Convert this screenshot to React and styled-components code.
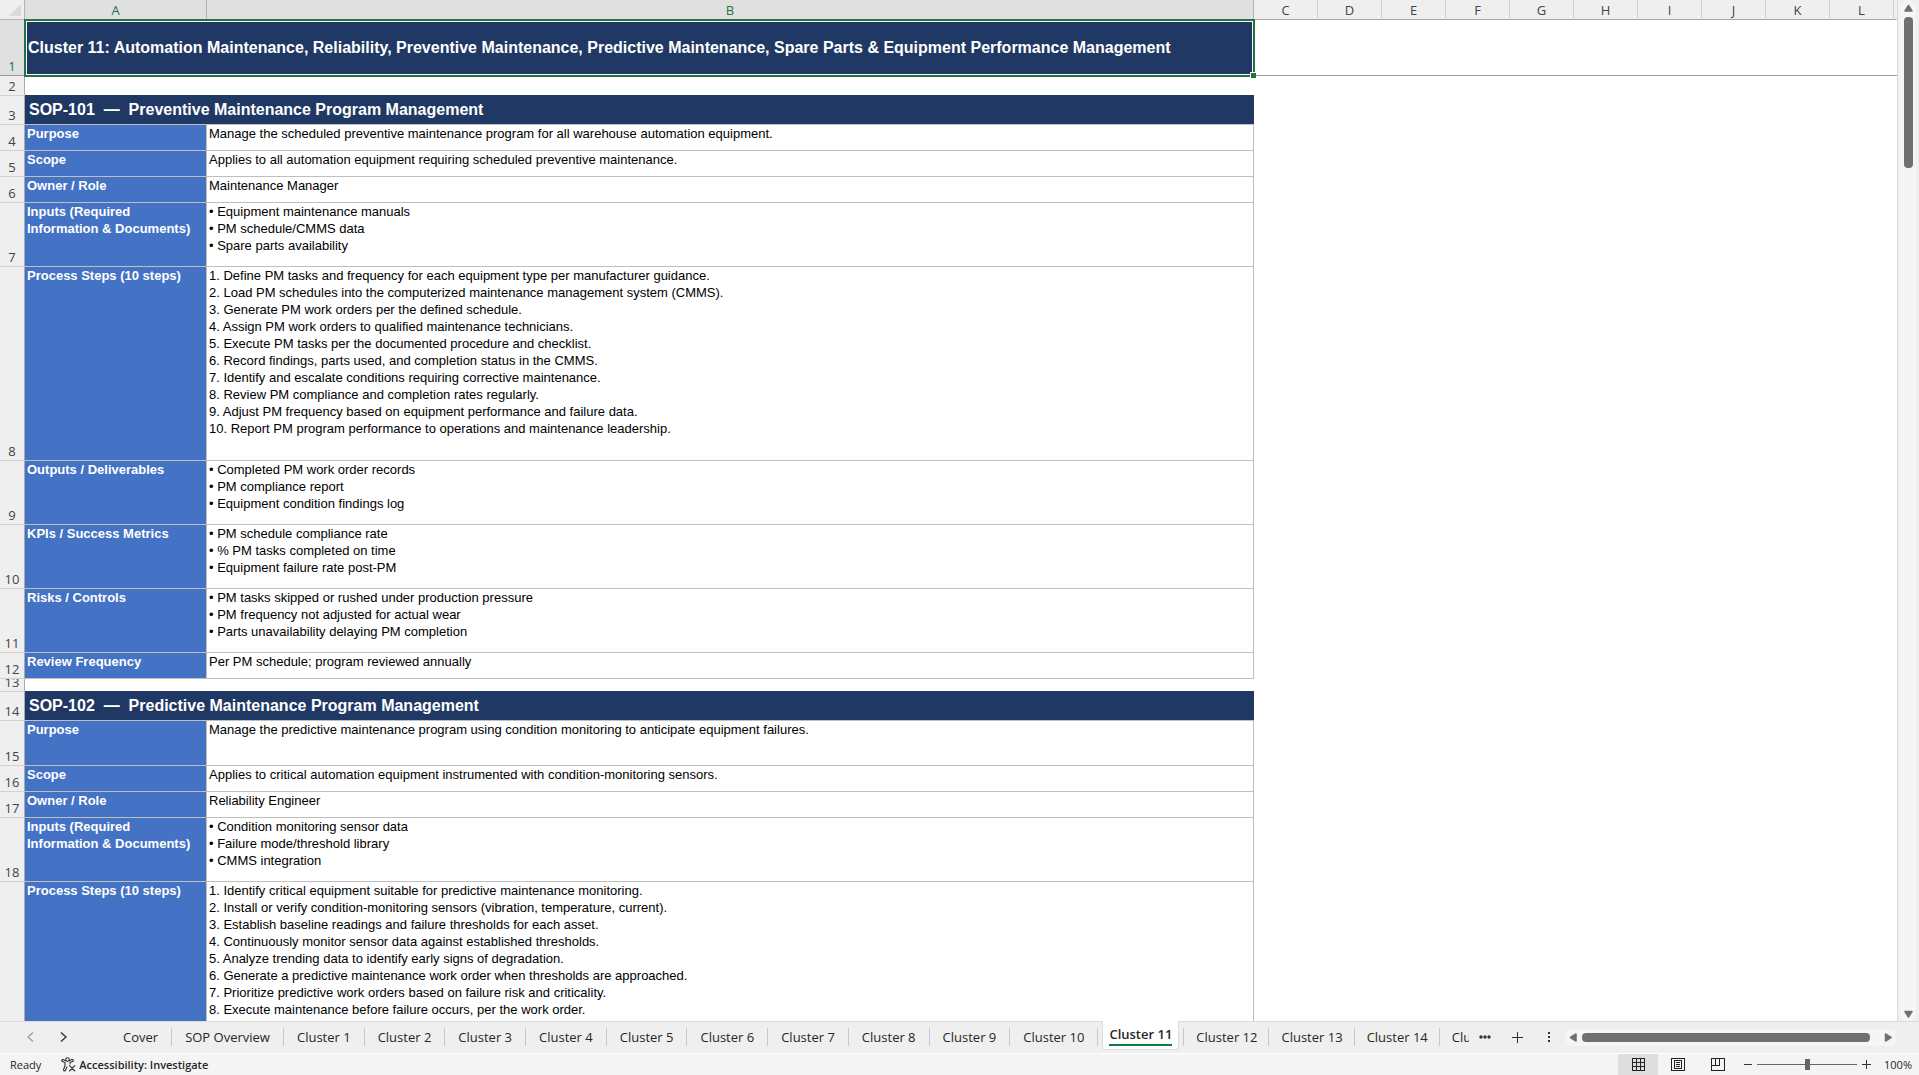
import React from "react";
import styled, { createGlobalStyle, css } from "styled-components";

const UI = `"Open Sans", "Noto Sans", sans-serif`;
const CELL = `"Liberation Sans", Arial, sans-serif`;

const Global = createGlobalStyle`
  *, *::before, *::after { box-sizing: border-box; }
  html, body { margin: 0; height: 100%; overflow: hidden; background: #efefef; }
  #root { height: 100%; }
  button { font: inherit; color: inherit; border: 0; background: none; padding: 0; cursor: pointer; }
`;

const Window = styled.div`
  display: flex;
  flex-direction: column;
  height: 100vh;
  font-family: ${UI};
  font-size: 13px;
  color: #262626;
`;

const Workspace = styled.div`
  flex: 1;
  min-height: 0;
  display: flex;
`;

const Sheet = styled.main`
  flex: 1;
  min-width: 0;
  overflow: hidden;
  background: #fff;
  border-right: 1px solid #dcdcdc;
`;

const Grid = styled.table`
  width: 100%;
  table-layout: fixed;
  border-collapse: separate;
  border-spacing: 0;
`;

const Col = styled.col`
  width: ${(p) => (p.$w ? `${p.$w}px` : "auto")};
`;

const headFace = css`
  padding: 0;
  font-weight: 400;
  line-height: 17px;
  color: ${(p) => (p.$on ? "#217346" : "#444")};
`;

const ColHead = styled.th`
  ${headFace}
  height: 20px;
  padding-top: 2px;
  text-align: center;
  background: ${(p) => (p.$on ? "#e0e0e0" : "#efefef")};
  border-bottom: 1px solid ${(p) => (p.$on ? "#217346" : "#a6a6a6")};
  border-right: 1px solid;
  border-right-color: ${(p) => (p.$last ? "transparent" : p.$on ? "#b4b4b4" : "#d2d2d2")};
`;

const Corner = styled.td`
  padding: 0 3px 3px 0;
  height: 20px;
  background: #efefef;
  border-right: 1px solid #b4b4b4;
  border-bottom: 1px solid #b4b4b4;
  vertical-align: bottom;
  line-height: 0;
  text-align: right;
`;

const RowHead = styled.th`
  ${headFace}
  height: ${(p) => p.$h}px;
  vertical-align: bottom;
  text-align: center;
  background: ${(p) => (p.$on ? "#e0e0e0" : "#efefef")};
  border-right: 1px solid ${(p) => (p.$on ? "#217346" : "#ababab")};
  border-bottom: 1px solid ${(p) => (p.$on ? "#999" : "#d2d2d2")};
`;

const RowNumber = styled.div`
  display: flex;
  align-items: flex-end;
  justify-content: center;
  height: ${(p) => Math.min(p.$h - 1, 17)}px;
  line-height: 17px;
  overflow: hidden;
`;

const TitleCell = styled.td`
  position: relative;
  padding: 0 3px;
  background: #203864;
  border-bottom: 1px solid #999;
  color: #fff;
  font: 700 16px/24px ${CELL};
  white-space: nowrap;
`;

const Selection = styled.span`
  position: absolute;
  inset: -1px -1px -2px -1px;
  border: 2px solid #217346;
  box-shadow: inset 0 0 0 1px #fff;
  pointer-events: none;

  &::after {
    content: "";
    position: absolute;
    right: -3px;
    bottom: -3px;
    width: 6px;
    height: 6px;
    background: #217346;
    border-left: 1px solid #fff;
    border-top: 1px solid #fff;
  }
`;

const FrozenEdge = styled.td`
  border-bottom: 1px solid #999;
`;

const Blank = styled.td`
  padding: 0;
  border-bottom: 1px solid #203864;
`;

const SectionCell = styled.td`
  padding: 0 4px;
  background: #203864;
  border-bottom: 1px solid #bfbfbf;
  color: #fff;
  font: 700 16px/24px ${CELL};
  white-space: pre;
`;

const LabelCell = styled.th`
  padding: 0 2px;
  text-align: left;
  vertical-align: top;
  background: #4472c4;
  color: #fff;
  border-right: 1px solid #bfbfbf;
  border-bottom: 1px solid #bfbfbf;
  font: 700 13px/17px ${CELL};
`;

const TextCell = styled.td`
  padding: 0 2px;
  vertical-align: top;
  color: #000;
  border-right: 1px solid #bfbfbf;
  border-bottom: 1px solid #bfbfbf;
  font: 400 13px/17px ${CELL};
`;

const VerticalScroll = styled.div`
  width: 21px;
  padding: 0 3px 0 2px;
  display: flex;
`;

const VerticalTrack = styled.div`
  flex: 1;
  display: flex;
  flex-direction: column;
  align-items: center;
  padding: 4px 0 2px;
  background: #f5f5f5;
  border-radius: 8px;
`;

const ScrollButton = styled.button`
  display: flex;
  line-height: 0;
`;

const VerticalThumb = styled.div`
  width: 9px;
  height: 151px;
  margin: 4px 0 auto;
  border-radius: 4px;
  background: #707070;
`;

const TabBar = styled.nav`
  display: flex;
  height: 32px;
  background: #efefef;
  border-top: 1px solid #dcdcdc;
`;

const TabArrows = styled.div`
  display: flex;
  align-items: center;
  gap: 24px;
  padding: 0 42px 1px 26px;
  button { display: flex; }
`;

const Tabs = styled.div`
  flex: 1;
  min-width: 0;
  display: flex;
  overflow: hidden;
  margin-top: -1px;
`;

const Tab = styled.button`
  flex: none;
  position: relative;
  height: 32px;
  padding: ${(p) => (p.$tight ? "0 12px" : "0 14px 0 13px")};
  font-size: 13px;
  line-height: 32px;
  white-space: nowrap;

  &::after {
    content: "";
    position: absolute;
    right: 0;
    top: 7px;
    height: 18px;
    width: 1px;
    background: #c8c8c8;
  }
`;

const ActiveTab = styled(Tab)`
  height: 29px;
  margin: 0 5px 0 4px;
  padding: 0 6px;
  font-weight: 600;
  line-height: 20px;
  background: #fff;
  border: 1px solid #dcdcdc;
  border-top: 0;
  border-radius: 0 0 4px 4px;

  &::after { right: -6px; }
  span { display: block; border-bottom: 2px solid #107c41; }
`;

const TabTools = styled.div`
  display: flex;
  padding-bottom: 1px;
`;

const ToolButton = styled.button`
  display: flex;
  align-items: center;
  justify-content: center;
  width: 32px;
`;

const HorizontalTrack = styled.div`
  display: flex;
  align-items: center;
  align-self: center;
  width: 332px;
  height: 17px;
  margin-right: 22px;
  padding: 0 4px;
  gap: 4px;
  background: #f5f5f5;
  border-radius: 8px;
`;

const HorizontalThumb = styled.div`
  width: 288px;
  height: 9px;
  margin-right: auto;
  border-radius: 4px;
  background: #707070;
`;

const StatusBar = styled.footer`
  display: flex;
  align-items: stretch;
  height: 22px;
  background: #f4f4f4;
  border-top: 1px solid #fff;
  font-size: 11px;
`;

const StatusText = styled.span`
  padding: 0 20px 0 10px;
  line-height: 22px;
`;

const AccessButton = styled.button`
  display: flex;
  align-items: center;
  gap: 3px;
  font-weight: 600;
`;

const ViewButtons = styled.div`
  display: flex;
  margin-left: auto;
`;

const ViewButton = styled.button`
  display: flex;
  align-items: center;
  justify-content: center;
  width: 40px;
  padding-bottom: 1px;
  background: ${(p) => (p.$on ? "#dedede" : "transparent")};
`;

const Zoom = styled.div`
  display: flex;
  align-items: center;
  gap: 5px;
  padding: 0 7px 0 6px;
  button { display: flex; }
`;

const Slider = styled.input`
  appearance: none;
  width: 100px;
  height: 12px;
  margin: 0;
  background: linear-gradient(#666, #666) center / 100% 1px no-repeat;

  &::-webkit-slider-thumb {
    appearance: none;
    width: 5px;
    height: 11px;
    background: #666;
  }
`;

const ZoomLevel = styled.button`
  padding-left: 8px;
`;

const Triangle = ({ dir }) => {
  const d = {
    up: "M1 7 L4.5 1.5 L8 7 Z",
    down: "M1 1.5 L8 1.5 L4.5 7 Z",
    left: "M7 1 L1.5 4.5 L7 8 Z",
    right: "M1.5 1 L7 4.5 L1.5 8 Z",
  }[dir];
  return (
    <svg width="9" height="9" viewBox="0 0 9 9">
      <path d={d} fill="#707070" stroke="#707070" strokeWidth="1.5" strokeLinejoin="round" />
    </svg>
  );
};

const Chevron = ({ dir, color }) => (
  <svg width="9" height="12" viewBox="0 0 9 12" fill="none" stroke={color} strokeWidth="1.4">
    <path d={dir === "left" ? "M7 1.5 L2 6 L7 10.5" : "M2 1.5 L7 6 L2 10.5"} />
  </svg>
);

const AccessIcon = () => (
  <svg width="15" height="15" viewBox="0 0 15 15" fill="none" stroke="#333" strokeWidth="1.1" strokeLinejoin="round" strokeLinecap="round">
    <circle cx="6.5" cy="2.6" r="1.8" />
    <path d="M4.6 3.8 L2 2.6 C.7 2.2 .2 3.9 1.3 4.4 L4 5.6 V8.5 L2.6 12.5 C2.3 14 4 14.5 4.5 13.3 L6 10" />
    <path d="M8.4 3.8 L11 2.6 C12.3 2.2 12.8 3.9 11.7 4.4 L9 5.6 V7" />
    <path d="M8.5 8.7 L13.8 14 M13.8 8.7 L8.5 14" />
  </svg>
);

const GridIcon = () => (
  <svg width="13" height="13" viewBox="0 0 13 13" fill="none" stroke="#222" shapeRendering="crispEdges">
    <path d="M.5 .5H12.5V12.5H.5Z M4.5 .5V12.5 M8.5 .5V12.5 M.5 4.5H12.5 M.5 8.5H12.5" />
  </svg>
);

const PageIcon = () => (
  <svg width="14" height="13" viewBox="0 0 14 13" fill="none" stroke="#222" shapeRendering="crispEdges">
    <path d="M.5 .5H13.5V12.5H.5Z M3.5 2.5H10.5V10.5H3.5Z M5 4.5H9 M5 6.5H9 M5 8.5H9" />
  </svg>
);

const BreakIcon = () => (
  <svg width="14" height="13" viewBox="0 0 14 13" fill="none" stroke="#222" shapeRendering="crispEdges">
    <path d="M.5 .5H13.5V12.5H.5Z M4.5 .5V7.5 M8.5 .5V7.5 M.5 7.5H8.5" />
  </svg>
);

const Plus = ({ size }) => (
  <svg width={size} height={size} viewBox={`0 0 ${size} ${size}`} stroke="#333" shapeRendering="crispEdges">
    <path d={`M0 ${size / 2}H${size} M${size / 2} 0V${size}`} />
  </svg>
);

const Minus = () => (
  <svg width="8" height="9" viewBox="0 0 8 9" stroke="#333" shapeRendering="crispEdges">
    <path d="M0 4.5H8" />
  </svg>
);

const Dots = ({ vertical }) => (
  <svg width={vertical ? 2 : 12} height={vertical ? 12 : 4} fill="#333">
    {[0, 1, 2].map((i) =>
      vertical ? (
        <rect key={i} x="0" y={i * 4 + 1} width="2" height="2" />
      ) : (
        <circle key={i} cx={i * 4 + 2} cy="2" r="1.7" />
      )
    )}
  </svg>
);

const letters = ["C", "D", "E", "F", "G", "H", "I", "J", "K", "L"];

const rows = [
  { h: 29, section: "SOP-101  —  Preventive Maintenance Program Management" },
  { h: 26, label: "Purpose", text: ["Manage the scheduled preventive maintenance program for all warehouse automation equipment."] },
  { h: 26, label: "Scope", text: ["Applies to all automation equipment requiring scheduled preventive maintenance."] },
  { h: 26, label: "Owner / Role", text: ["Maintenance Manager"] },
  { h: 64, label: "Inputs (Required Information & Documents)", text: ["• Equipment maintenance manuals", "• PM schedule/CMMS data", "• Spare parts availability"] },
  {
    h: 194,
    label: "Process Steps (10 steps)",
    text: [
      "1. Define PM tasks and frequency for each equipment type per manufacturer guidance.",
      "2. Load PM schedules into the computerized maintenance management system (CMMS).",
      "3. Generate PM work orders per the defined schedule.",
      "4. Assign PM work orders to qualified maintenance technicians.",
      "5. Execute PM tasks per the documented procedure and checklist.",
      "6. Record findings, parts used, and completion status in the CMMS.",
      "7. Identify and escalate conditions requiring corrective maintenance.",
      "8. Review PM compliance and completion rates regularly.",
      "9. Adjust PM frequency based on equipment performance and failure data.",
      "10. Report PM program performance to operations and maintenance leadership.",
    ],
  },
  { h: 64, label: "Outputs / Deliverables", text: ["• Completed PM work order records", "• PM compliance report", "• Equipment condition findings log"] },
  { h: 64, label: "KPIs / Success Metrics", text: ["• PM schedule compliance rate", "• % PM tasks completed on time", "• Equipment failure rate post-PM"] },
  { h: 64, label: "Risks / Controls", text: ["• PM tasks skipped or rushed under production pressure", "• PM frequency not adjusted for actual wear", "• Parts unavailability delaying PM completion"] },
  { h: 26, label: "Review Frequency", text: ["Per PM schedule; program reviewed annually"] },
  { h: 13 },
  { h: 29, section: "SOP-102  —  Predictive Maintenance Program Management" },
  { h: 45, label: "Purpose", text: ["Manage the predictive maintenance program using condition monitoring to anticipate equipment failures."] },
  { h: 26, label: "Scope", text: ["Applies to critical automation equipment instrumented with condition-monitoring sensors."] },
  { h: 26, label: "Owner / Role", text: ["Reliability Engineer"] },
  { h: 64, label: "Inputs (Required Information & Documents)", text: ["• Condition monitoring sensor data", "• Failure mode/threshold library", "• CMMS integration"] },
  {
    h: 194,
    open: true,
    label: "Process Steps (10 steps)",
    text: [
      "1. Identify critical equipment suitable for predictive maintenance monitoring.",
      "2. Install or verify condition-monitoring sensors (vibration, temperature, current).",
      "3. Establish baseline readings and failure thresholds for each asset.",
      "4. Continuously monitor sensor data against established thresholds.",
      "5. Analyze trending data to identify early signs of degradation.",
      "6. Generate a predictive maintenance work order when thresholds are approached.",
      "7. Prioritize predictive work orders based on failure risk and criticality.",
      "8. Execute maintenance before failure occurs, per the work order.",
    ],
  },
];

const tabsBefore = ["Cover", "SOP Overview", ...Array.from({ length: 10 }, (_, i) => `Cluster ${i + 1}`)];
const tabsAfter = ["Cluster 12", "Cluster 13", "Cluster 14", "Cluster 15"];

const NumberCell = ({ n, h, on }) => (
  <RowHead scope="row" $h={h} $on={on}>
    {n && <RowNumber $h={h}>{n}</RowNumber>}
  </RowHead>
);

const Row = ({ n, row }) => (
  <tr>
    <NumberCell n={row.open ? null : n} h={row.h} />
    {row.section && <SectionCell colSpan={2}>{row.section}</SectionCell>}
    {row.label && (
      <>
        <LabelCell scope="row">{row.label}</LabelCell>
        <TextCell>
          {row.text.map((line) => (
            <div key={line}>{line}</div>
          ))}
        </TextCell>
      </>
    )}
    {!row.section && !row.label && <Blank colSpan={2} />}
    <td colSpan={11} />
  </tr>
);

export default function App() {
  return (
    <Window>
      <Global />
      <Workspace>
        <Sheet>
          <Grid>
            <colgroup>
              <Col $w={25} />
              <Col $w={182} />
              <Col $w={1047} />
              {letters.map((l) => (
                <Col key={l} $w={64} />
              ))}
              <Col />
            </colgroup>
            <thead>
              <tr>
                <Corner>
                  <svg width="12" height="12" viewBox="0 0 12 12">
                    <path d="M12 0V12H0Z" fill="#dadada" />
                  </svg>
                </Corner>
                <ColHead $on>A</ColHead>
                <ColHead $on>B</ColHead>
                {letters.map((l) => (
                  <ColHead key={l}>{l}</ColHead>
                ))}
                <ColHead $last />
              </tr>
            </thead>
            <tbody>
              <tr>
                <NumberCell n={1} h={56} on />
                <TitleCell colSpan={2}>
                  Cluster 11: Automation Maintenance, Reliability, Preventive Maintenance, Predictive Maintenance, Spare Parts &amp; Equipment Performance Management
                  <Selection />
                </TitleCell>
                <FrozenEdge colSpan={11} />
              </tr>
              <tr>
                <NumberCell n={2} h={20} />
                <Blank colSpan={2} />
                <td colSpan={11} />
              </tr>
              {rows.map((row, i) => (
                <Row key={i} n={i + 3} row={row} />
              ))}
            </tbody>
          </Grid>
        </Sheet>
        <VerticalScroll>
          <VerticalTrack>
            <ScrollButton aria-label="Scroll up"><Triangle dir="up" /></ScrollButton>
            <VerticalThumb />
            <ScrollButton aria-label="Scroll down"><Triangle dir="down" /></ScrollButton>
          </VerticalTrack>
        </VerticalScroll>
      </Workspace>
      <TabBar>
        <TabArrows>
          <button aria-label="Previous sheets"><Chevron dir="left" color="#a0a0a0" /></button>
          <button aria-label="Next sheets"><Chevron dir="right" color="#333" /></button>
        </TabArrows>
        <Tabs>
          {tabsBefore.map((t) => (
            <Tab key={t}>{t}</Tab>
          ))}
          <ActiveTab><span>Cluster 11</span></ActiveTab>
          {tabsAfter.map((t) => (
            <Tab key={t} $tight>{t}</Tab>
          ))}
        </Tabs>
        <TabTools>
          <ToolButton aria-label="More sheets"><Dots /></ToolButton>
          <ToolButton aria-label="New sheet"><Plus size={11} /></ToolButton>
          <ToolButton aria-label="Resize"><Dots vertical /></ToolButton>
        </TabTools>
        <HorizontalTrack>
          <ScrollButton aria-label="Scroll left"><Triangle dir="left" /></ScrollButton>
          <HorizontalThumb />
          <ScrollButton aria-label="Scroll right"><Triangle dir="right" /></ScrollButton>
        </HorizontalTrack>
      </TabBar>
      <StatusBar>
        <StatusText>Ready</StatusText>
        <AccessButton><AccessIcon />Accessibility: Investigate</AccessButton>
        <ViewButtons>
          <ViewButton $on aria-label="Normal"><GridIcon /></ViewButton>
          <ViewButton aria-label="Page layout"><PageIcon /></ViewButton>
          <ViewButton aria-label="Page break preview"><BreakIcon /></ViewButton>
        </ViewButtons>
        <Zoom>
          <button aria-label="Zoom out"><Minus /></button>
          <Slider type="range" aria-label="Zoom" min="0" max="200" defaultValue="100" />
          <button aria-label="Zoom in"><Plus size={9} /></button>
          <ZoomLevel>100%</ZoomLevel>
        </Zoom>
      </StatusBar>
    </Window>
  );
}
